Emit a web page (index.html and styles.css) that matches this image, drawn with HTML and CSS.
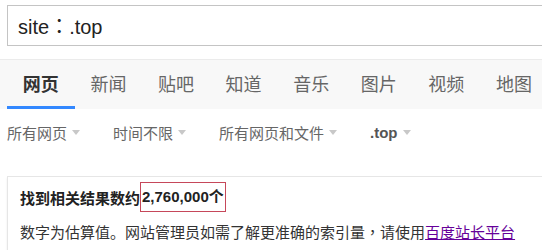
FILE: index.html
```html
<!DOCTYPE html>
<html lang="zh-CN">
<head>
    <meta charset="UTF-8">
    <meta name="viewport" content="width=device-width, initial-scale=1.0">
    <title>site：.top</title>
    <link rel="stylesheet" href="styles.css">
</head>
<body>
    <!-- 검색창 -->
    <div class="searchbox">site<span class="mid" lang="zh-Hant">：</span>.top</div>

    <!-- 탭 메뉴 -->
    <nav class="tabs">
        <a href="#" class="tab on">网页</a>
        <a href="#" class="tab">新闻</a>
        <a href="#" class="tab">贴吧</a>
        <a href="#" class="tab">知道</a>
        <a href="#" class="tab">音乐</a>
        <a href="#" class="tab">图片</a>
        <a href="#" class="tab">视频</a>
        <a href="#" class="tab">地图</a>
    </nav>

    <!-- 필터 -->
    <div class="filters">
        <span class="filter">所有网页<i class="arrow"></i></span>
        <span class="filter">时间不限<i class="arrow"></i></span>
        <span class="filter">所有网页和文件<i class="arrow"></i></span>
        <span class="filter bold">.top<i class="arrow"></i></span>
    </div>

    <!-- 결과 -->
    <section class="result">
        <h3 class="count">找到相关结果数约<span class="num">2,760,000个</span></h3>
        <p class="note">数字为估算值。网站管理员如需了解更准确的索引量<span class="mid" lang="zh-Hant">，</span>请使用<a href="#">百度站长平台</a></p>
    </section>
</body>
</html>
```

FILE: styles.css
```css
* {margin:0;padding:0;box-sizing:border-box;}
body {font-family:"Noto Sans CJK SC","Microsoft YaHei",sans-serif;background:#fff;color:#333;overflow:hidden;}

.searchbox {margin:5px 0 0 7px;width:560px;height:41px;border:1px solid #c4c4c4;
            padding-left:10px;line-height:39px;font-family:"Liberation Sans",Arial,sans-serif;
            font-size:20px;color:#222;
}
/* 가운데 정렬 전각 문장부호 (번체 글리프) */
.mid {font-family:"Noto Sans CJK TC",sans-serif;}

/* 탭 */
.tabs {margin-top:13px;border-top:1px solid #ebebeb;background:#f8f8f8;height:50px;
       display:flex;padding-left:7px;
}
.tab {display:block;width:67.6px;text-align:center;font-size:18px;line-height:46px;
      color:#666;text-decoration:none;flex-shrink:0;
}
.tab.on {color:#333;font-weight:bold;border-bottom:3px solid #3388ff;height:49px;}

/* 필터 */
.filters {display:flex;gap:33px;padding-left:7px;margin-top:12px;height:22px;align-items:center;}
.filter {font-size:15px;color:#666;display:flex;align-items:center;}
.filter.bold {font-family:"Liberation Sans",Arial,sans-serif;font-weight:bold;color:#555;}
.arrow {display:inline-block;margin-left:5px;border-left:4px solid transparent;
        border-right:4px solid transparent;border-top:5px solid #c8c8c8;
}

/* 결과 박스 */
.result {margin:33px 0 0 7px;width:560px;height:77px;border:1px solid #e6e6e6;
         box-shadow:0 2px 2px rgba(0,0,0,0.08);padding:5px 0 0 12px;
}
.count {font-size:15px;font-weight:bold;color:#222;display:flex;align-items:center;height:30px;}
.num {border:1px solid #c6485a;padding:0 1px;height:30px;line-height:28px;
      font-family:"Liberation Sans",Arial,"Noto Sans CJK SC",sans-serif;}
.note {font-size:15px;color:#333;margin-top:9px;line-height:22px;}
.note a {color:#660099;}
```
